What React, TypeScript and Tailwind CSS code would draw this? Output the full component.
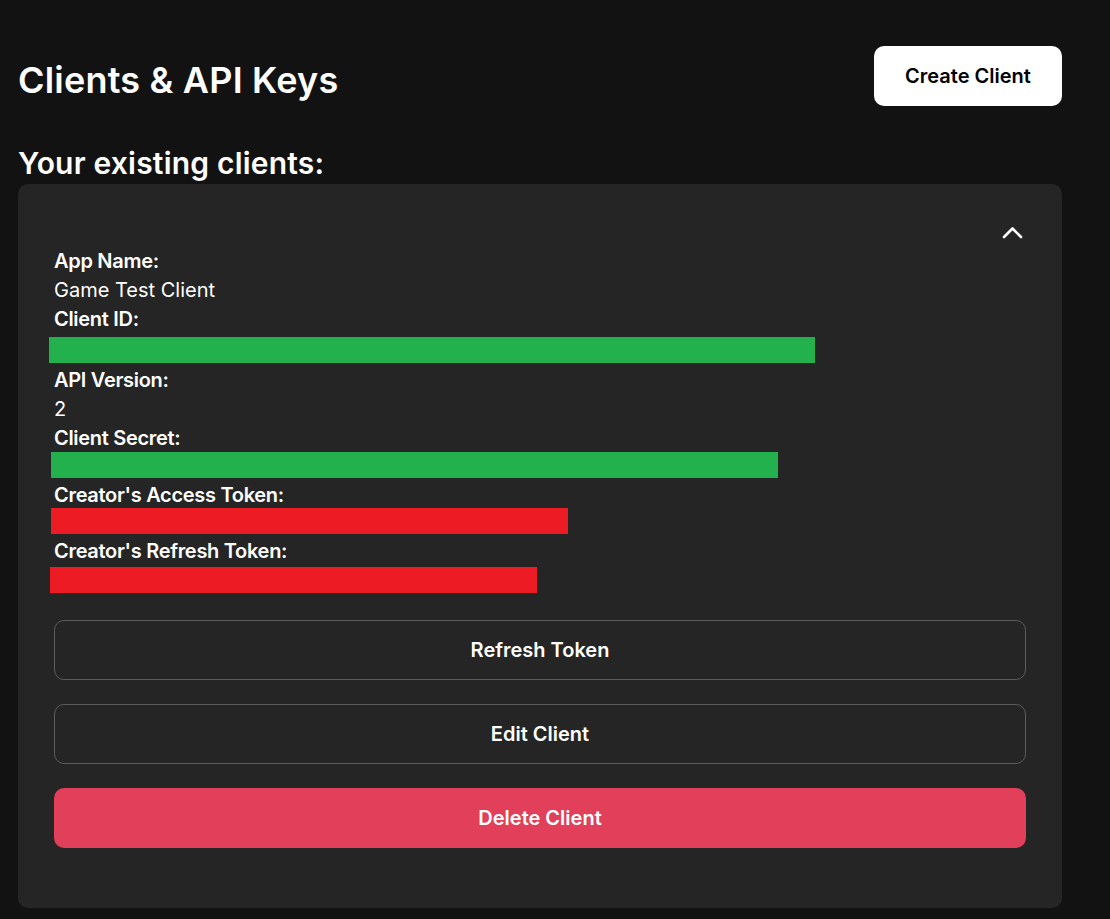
import React from "react";

const font = { fontFamily: "Inter, 'Noto Sans', sans-serif" };

function Row({ label, children }: { label: string; children: React.ReactNode }) {
  return (
    <>
      <div className="font-semibold text-[20px] leading-[29px] tracking-[-0.3px] text-white">{label}</div>
      {children}
    </>
  );
}

function Bar({ w, color, cls }: { w: string; color: string; cls: string }) {
  return (
    <div className="h-[29px]">
      <div className={`h-[26px] ${w} ${color} ${cls}`} />
    </div>
  );
}

export default function App() {
  return (
    <div className="min-h-[919px] bg-[#121212] text-white px-[18px] pt-[46px] pb-[10px] w-[1110px]" style={font}>
      <div className="flex items-start justify-between w-[1044px]">
        <h1 className="mt-[14px] text-[36px] leading-[40px] font-semibold tracking-[0.2px]">Clients &amp; API Keys</h1>
        <button className="w-[188px] h-[60px] rounded-[10px] bg-white text-black text-[20px] font-semibold">
          Create Client
        </button>
      </div>
      <h2 className="mt-[39px] text-[30px] leading-[36px] font-semibold tracking-[0.2px]">Your existing clients:</h2>
      <div className="w-[1044px] mt-[3px] rounded-[10px] bg-[#252525] px-[36px] pt-[36px] pb-[36px]">
        <div className="flex justify-end h-[24px] items-center pr-[3px]">
          <svg width="21" height="13" viewBox="0 0 21 13" fill="none">
            <polyline points="2,11 10.5,2.5 19,11" stroke="white" strokeWidth="2.6" strokeLinecap="round" strokeLinejoin="round" />
          </svg>
        </div>
        <div className="mt-[3px]">
          <Row label="App Name:">
            <div className="text-[20px] leading-[29px] text-white">Game Test Client</div>
          </Row>
          <Row label="Client ID:">
            <Bar w="w-[766px]" color="bg-[#22b14c]" cls="-ml-[5px] mt-[3px]" />
          </Row>
          <Row label="API Version:">
            <div className="text-[20px] leading-[29px] text-white">2</div>
          </Row>
          <Row label="Client Secret:">
            <Bar w="w-[727px]" color="bg-[#22b14c]" cls="-ml-[3px] -mt-[1px]" />
          </Row>
          <Row label="Creator's Access Token:">
            <Bar w="w-[517px]" color="bg-[#ed1c24]" cls="-ml-[3px] -mt-[2px]" />
          </Row>
          <Row label="Creator's Refresh Token:">
            <Bar w="w-[487px]" color="bg-[#ed1c24]" cls="-ml-[4px] mt-[1px]" />
          </Row>
        </div>
        <div className="mt-[24px] flex flex-col gap-[24px] pb-[24px]">
          <button className="h-[60px] w-full rounded-[10px] border border-[#5c5c5c] text-white text-[20px] font-semibold">
            Refresh Token
          </button>
          <button className="h-[60px] w-full rounded-[10px] border border-[#5c5c5c] text-white text-[20px] font-semibold">
            Edit Client
          </button>
          <button className="h-[60px] w-full rounded-[10px] bg-[#e23f5a] text-white text-[20px] font-semibold">
            Delete Client
          </button>
        </div>
      </div>
    </div>
  );
}
